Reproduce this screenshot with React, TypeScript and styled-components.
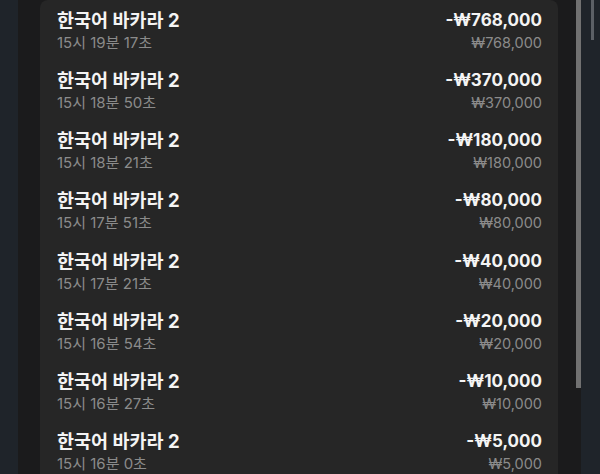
import React, { FC } from 'react';
import styled, { createGlobalStyle } from 'styled-components';

const GlobalStyle = createGlobalStyle`
  html, body {
    margin: 0;
    padding: 0;
    height: 100%;
    overflow: hidden;
    background: #1f242a;
  }
  #root {
    height: 100%;
  }
`;

const Page = styled.div`
  display: flex;
  height: 474px;
  width: 600px;
  overflow: hidden;
  font-family: 'Inter', 'Noto Sans CJK KR', sans-serif;
`;

const Gutter = styled.div`
  width: 18px;
  flex-shrink: 0;
`;

const Panel = styled.div`
  width: 563px;
  flex-shrink: 0;
  display: flex;
  padding-left: 22px;
  box-sizing: border-box;
  background: #1b1b1c;
`;

const Card = styled.div`
  width: 518px;
  flex-shrink: 0;
  background: #262626;
  border-radius: 8px 8px 0 0;
  padding-top: 1px;
  align-self: flex-start;
`;

const ScrollTrack = styled.div`
  margin-left: 18px;
  width: 5px;
`;

const Thumb = styled.div<{ $height: number }>`
  width: 5px;
  height: ${(p) => p.$height}px;
  background: #717171;
`;

const Outside = styled.div`
  flex: 1;
  padding-left: 10px;
`;

const PageThumb = styled.div`
  width: 3px;
  height: 40px;
  background: #5c6066;
`;

const Row = styled.div`
  height: 60.15px;
  box-sizing: border-box;
  padding: 8px 16px 8px 17px;
  display: flex;
  justify-content: space-between;
`;

const Col = styled.div<{ $align: 'left' | 'right' }>`
  display: flex;
  flex-direction: column;
  gap: 2px;
  align-items: ${(p) => (p.$align === 'right' ? 'flex-end' : 'flex-start')};
`;

const Title = styled.div<{ $size: number }>`
  font-size: ${(p) => p.$size}px;
  line-height: 22px;
  font-weight: 700;
  color: #f4f4f4;
`;

const Sub = styled.div<{ $size: number }>`
  font-size: ${(p) => p.$size}px;
  line-height: 20px;
  font-weight: 400;
  color: #8b8b8b;
`;

interface Bet {
  time: string;
  amount: string;
}

const bets: Bet[] = [
  { time: '15시 19분 17초', amount: '768,000' },
  { time: '15시 18분 50초', amount: '370,000' },
  { time: '15시 18분 21초', amount: '180,000' },
  { time: '15시 17분 51초', amount: '80,000' },
  { time: '15시 17분 21초', amount: '40,000' },
  { time: '15시 16분 54초', amount: '20,000' },
  { time: '15시 16분 27초', amount: '10,000' },
  { time: '15시 16분 0초', amount: '5,000' },
];

const App: FC = () => (
  <>
    <GlobalStyle />
    <Page>
      <Gutter />
      <Panel>
        <Card>
          {bets.map((b) => (
            <Row key={b.time}>
              <Col $align="left">
                <Title $size={18.5}>한국어 바카라 2</Title>
                <Sub $size={15}>{b.time}</Sub>
              </Col>
              <Col $align="right">
                <Title $size={17}>-₩{b.amount}</Title>
                <Sub $size={14.5}>₩{b.amount}</Sub>
              </Col>
            </Row>
          ))}
        </Card>
        <ScrollTrack>
          <Thumb $height={388} />
        </ScrollTrack>
      </Panel>
      <Outside>
        <PageThumb />
      </Outside>
    </Page>
  </>
);

export default App;
